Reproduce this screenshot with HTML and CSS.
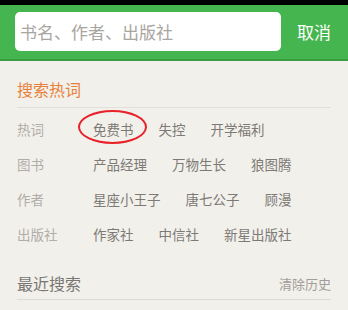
FILE: index.html
```html
<!DOCTYPE html>
<html lang="zh">
<head>
<meta charset="utf-8">
<link rel="stylesheet" href="styles.css">
</head>
<body>
<div class="status"></div>
<header class="header">
  <div class="search">书名、作者、出版社</div>
  <div class="cancel">取消</div>
</header>
<main class="content">
  <div class="section-title hot">搜索热词</div>
  <div class="rows">
    <div class="row">
      <span class="label">热词</span>
      <span class="item circled">免费书</span>
      <span class="item">失控</span>
      <span class="item">开学福利</span>
    </div>
    <div class="row">
      <span class="label">图书</span>
      <span class="item">产品经理</span>
      <span class="item">万物生长</span>
      <span class="item">狼图腾</span>
    </div>
    <div class="row">
      <span class="label">作者</span>
      <span class="item">星座小王子</span>
      <span class="item">唐七公子</span>
      <span class="item">顾漫</span>
    </div>
    <div class="row">
      <span class="label">出版社</span>
      <span class="item">作家社</span>
      <span class="item">中信社</span>
      <span class="item">新星出版社</span>
    </div>
  </div>
  <div class="recent">
    <span class="recent-title">最近搜索</span>
    <span class="clear">清除历史</span>
  </div>
</main>
</body>
</html>
```
FILE: styles.css
```css
* { box-sizing: border-box; }
html, body { margin: 0; padding: 0; }
body {
  width: 348px;
  height: 310px;
  overflow: hidden;
  background: #f2f0eb;
  font-family: "Noto Sans CJK SC", "Noto Sans", sans-serif;
}
.status { height: 5px; background: #000; }
.header {
  height: 56px;
  background: #45b64f;
  border-bottom: 2px solid #3a9c43;
  display: flex;
  align-items: center;
  justify-content: space-between;
  padding: 0 17px 2px 15px;
}
.search {
  width: 266px;
  height: 39px;
  background: #fff;
  border-radius: 5px;
  display: flex;
  align-items: center;
  padding-left: 5px;
  font-size: 17px;
  color: #a9a59f;
}
.cancel {
  color: #fff;
  font-size: 17px;
}
.content { padding: 0 17px; }
.section-title.hot {
  height: 47px;
  display: flex;
  align-items: center;
  padding-top: 10px;
  font-size: 16px;
  color: #e8803a;
  border-bottom: 1px solid #e2ded8;
}
.rows { padding-top: 3px; }
.row {
  height: 35px;
  display: flex;
  align-items: center;
  font-size: 13.5px;
}
.label { width: 76px; color: #b1ada8; font-size: 13.5px; }
.item { color: #7d7a76; margin-right: 25px; position: relative; }
.circled::before {
  content: "";
  position: absolute;
  left: -15px;
  top: -9px;
  width: 69px;
  height: 34px;
  border: 2px solid #e8222a;
  border-radius: 50%;
  box-sizing: border-box;
}
.recent {
  margin-top: 15px;
  height: 34px;
  display: flex;
  align-items: center;
  justify-content: space-between;
  border-bottom: 1px solid #dedad4;
  padding-top: 1px;
}
.recent-title { font-size: 16px; color: #7a7773; }
.clear { font-size: 13px; color: #a19d98; }
```
